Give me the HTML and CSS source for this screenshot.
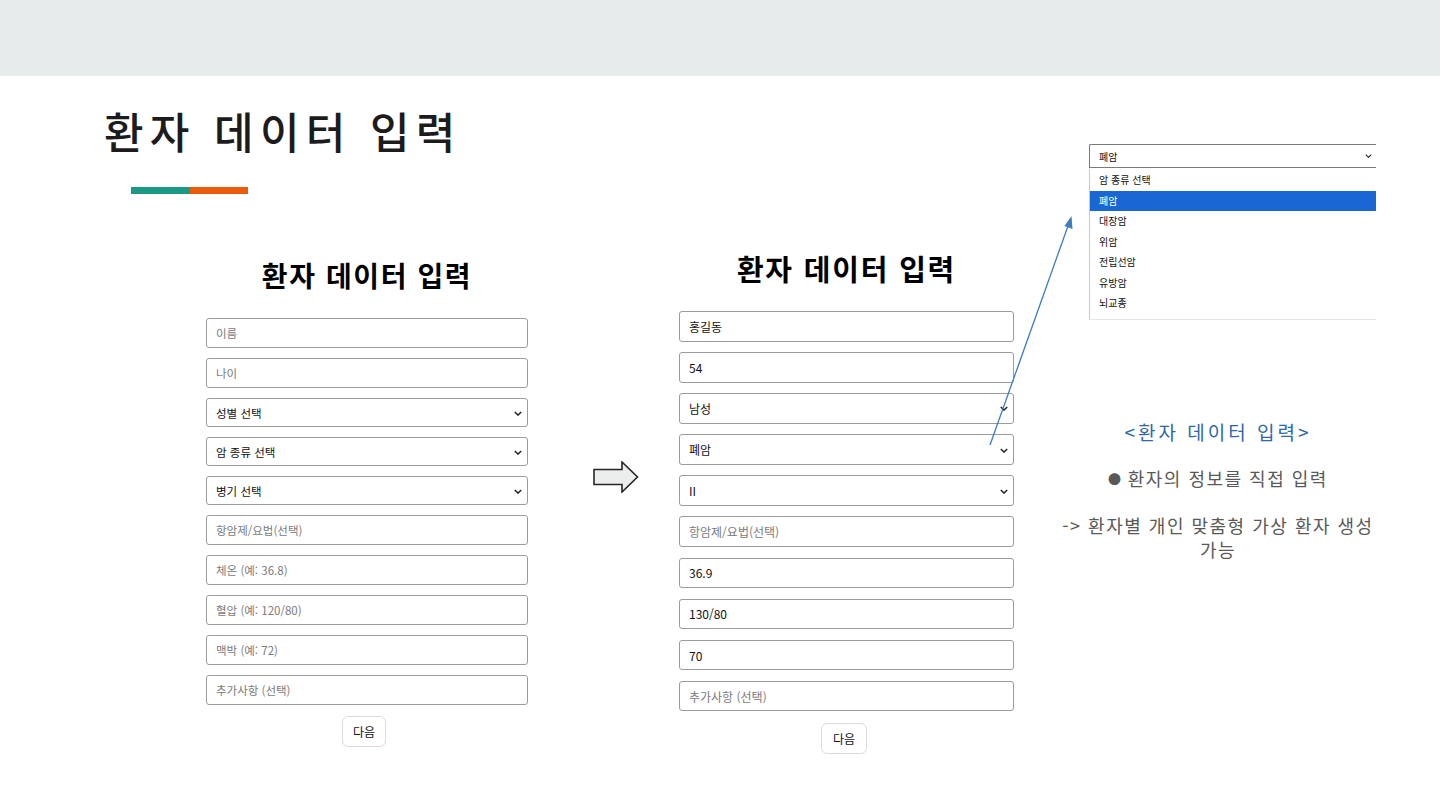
FILE: index.html
```html
<!DOCTYPE html>
<html lang="ko">
<head>
<meta charset="utf-8">
<title>환자 데이터 입력</title>
<link rel="stylesheet" href="styles.css">
</head>
<body>
<header class="topbar"></header>
<main class="slide">
  <section class="main">
    <h1 class="title">환자 데이터 입력</h1>
    <div class="accent"><span class="accent-teal"></span><span class="accent-orange"></span></div>
    <div class="forms-row">
      <form class="form form-left">
        <h2 class="form-heading">환자 데이터 입력</h2>
        <div class="fields">
          <input class="field" type="text" placeholder="이름">
          <input class="field" type="text" placeholder="나이">
          <div class="select-wrap"><select class="field select"><option>성별 선택</option></select><svg class="chev" viewBox="0 0 10 6"><path d="M1 1l4 4 4-4"/></svg></div>
          <div class="select-wrap"><select class="field select"><option>암 종류 선택</option></select><svg class="chev" viewBox="0 0 10 6"><path d="M1 1l4 4 4-4"/></svg></div>
          <div class="select-wrap"><select class="field select"><option>병기 선택</option></select><svg class="chev" viewBox="0 0 10 6"><path d="M1 1l4 4 4-4"/></svg></div>
          <input class="field" type="text" placeholder="항암제/요법(선택)">
          <input class="field" type="text" placeholder="체온 (예: 36.8)">
          <input class="field" type="text" placeholder="혈압 (예: 120/80)">
          <input class="field" type="text" placeholder="맥박 (예: 72)">
          <input class="field" type="text" placeholder="추가사항 (선택)">
        </div>
        <button class="next" type="button">다음</button>
      </form>

      <svg class="big-arrow" viewBox="0 0 46 32" width="46" height="32">
        <polygon points="1,8.5 29,8.5 29,1 44.5,16 29,31 29,23.5 1,23.5" fill="#eceeee" stroke="#262626" stroke-width="1.6" stroke-linejoin="miter"/>
      </svg>

      <form class="form form-mid">
        <h2 class="form-heading">환자 데이터 입력</h2>
        <div class="fields">
          <input class="field" type="text" value="홍길동">
          <input class="field" type="text" value="54">
          <div class="select-wrap"><select class="field select"><option>남성</option></select><svg class="chev" viewBox="0 0 10 6"><path d="M1 1l4 4 4-4"/></svg></div>
          <div class="select-wrap"><select class="field select"><option>폐암</option></select><svg class="chev" viewBox="0 0 10 6"><path d="M1 1l4 4 4-4"/></svg></div>
          <div class="select-wrap"><select class="field select"><option>II</option></select><svg class="chev" viewBox="0 0 10 6"><path d="M1 1l4 4 4-4"/></svg></div>
          <input class="field" type="text" placeholder="항암제/요법(선택)">
          <input class="field" type="text" value="36.9">
          <input class="field" type="text" value="130/80">
          <input class="field" type="text" value="70">
          <input class="field" type="text" placeholder="추가사항 (선택)">
        </div>
        <button class="next" type="button">다음</button>
      </form>
    </div>
  </section>

  <aside class="side">
    <div class="dropdown">
      <div class="dd-select"><span>폐암</span><svg class="chev chev-small" viewBox="0 0 10 6"><path d="M1 1l4 4 4-4"/></svg></div>
      <ul class="dd-list">
        <li>암 종류 선택</li>
        <li class="active">폐암</li>
        <li>대장암</li>
        <li>위암</li>
        <li>전립선암</li>
        <li>유방암</li>
        <li>뇌교종</li>
      </ul>
    </div>
    <div class="notes">
      <p class="note-title">&lt;환자 데이터 입력&gt;</p>
      <p class="note-bullet"><span class="dot">●</span> 환자의 정보를 직접 입력</p>
      <p class="note-text">-&gt; 환자별 개인 맞춤형 가상 환자 생성 가능</p>
    </div>
  </aside>

  <svg class="pointer" width="1440" height="810" viewBox="0 0 1440 810">
    <line x1="990" y1="445" x2="1068" y2="226" stroke="#3b7cc3" stroke-width="1.3"/>
    <polygon points="1071.5,216 1072.5,229 1064.5,226" fill="#3b7cc3"/>
  </svg>
</main>
</body>
</html>
```

FILE: styles.css
```css
* { box-sizing: border-box; }

html, body {
  margin: 0;
  padding: 0;
  width: 1440px;
  height: 810px;
  overflow: hidden;
  background: #ffffff;
  font-family: "Noto Sans CJK KR", "Noto Sans", sans-serif;
  color: #000;
}

.topbar {
  height: 76px;
  background: #e8ebeb;
}

.slide {
  display: flex;
  align-items: flex-start;
  height: 734px;
}

.main {
  width: 1060px;
  flex: none;
}

.title {
  margin: 26px 0 0 104px;
  font-size: 43px;
  line-height: 56px;
  font-weight: 500;
  letter-spacing: 6.3px;
  color: #1c1c1c;
}

.accent {
  display: flex;
  margin: 29px 0 0 131px;
  height: 7px;
}

.accent-teal { width: 59px; background: #1b9985; }
.accent-orange { width: 58px; background: #ea5b0c; }

.forms-row {
  display: flex;
  align-items: flex-start;
}

.form {
  display: flex;
  flex-direction: column;
  align-items: center;
}

.form-heading {
  margin: 0;
  font-weight: 700;
  color: #000;
  text-align: center;
}

.fields {
  display: flex;
  flex-direction: column;
  width: 100%;
}

.field {
  display: block;
  width: 100%;
  margin: 0;
  border: 1px solid #9c9c9c;
  border-radius: 3px;
  background: #fff;
  font-family: "Noto Sans CJK KR", "Noto Sans", sans-serif;
  font-size: 11.5px;
  color: #111;
  padding: 0 0 0 9px;
  outline: none;
}

.field::placeholder { color: #7b7b7b; }

.select {
  appearance: none;
  -webkit-appearance: none;
}

.select-wrap {
  position: relative;
}

.chev {
  position: absolute;
  right: 6px;
  top: 50%;
  width: 8px;
  height: 5px;
  margin-top: -2px;
  fill: none;
  stroke: #222;
  stroke-width: 1.8;
  pointer-events: none;
}

.next {
  font-family: "Noto Sans CJK KR", "Noto Sans", sans-serif;
  font-size: 12px;
  color: #111;
  background: #fff;
  border: 1px solid #dcdcdc;
  border-radius: 6px;
  padding: 0;
}

/* left form */
.form-left {
  width: 322px;
  margin: 63px 0 0 206px;
}
.form-left .form-heading {
  font-size: 28px;
  line-height: 36px;
  letter-spacing: 1.6px;
  margin-bottom: 25px;
}
.form-left .fields { gap: 10px; }
.form-left .field { height: 30px; }
.form-left .select { height: 29px; }
.form-left .next { margin: 11px 6px 0 0; width: 44px; height: 31px; }

/* arrow */
.big-arrow {
  flex: none;
  margin: 267px 0 0 65px;
}

/* middle form */
.form-mid {
  width: 335px;
  margin: 55px 0 0 40px;
}
.form-mid .form-heading {
  font-size: 29px;
  line-height: 38px;
  letter-spacing: 1.8px;
  margin-bottom: 24px;
}
.form-mid .fields { gap: 10.6px; }
.form-mid .field { height: 30.5px; font-size: 12px; }
.form-mid .next { margin: 12px 5px 0 0; width: 46px; height: 31px; }

/* side */
.side {
  width: 316px;
  flex: none;
  padding-top: 68px;
}

.dropdown {
  margin-left: 29px;
  width: 287px;
  font-size: 10px;
  color: #111;
}

.dd-select {
  position: relative;
  height: 24px;
  border: 1px solid #7a7a7a;
  border-right: none;
  border-radius: 2px 0 0 0;
  padding-left: 9px;
  display: flex;
  align-items: center;
}

.chev-small {
  right: 4px;
  width: 7px;
  height: 4px;
  stroke-width: 1.6;
}

.dd-list {
  list-style: none;
  margin: 1px 0 0;
  padding: 1px 0 5px;
  border-left: 1px solid #c8c8c8;
  border-bottom: 1px solid #e6e6e6;
}

.dd-list li {
  height: 20.5px;
  line-height: 20.5px;
  padding-left: 9px;
}

.dd-list li.active {
  background: #1967d2;
  color: #fff;
}

.notes {
  margin-top: 99px;
  text-align: center;
  color: #595959;
}

.notes p { margin: 0; }

.note-title {
  font-size: 19px;
  line-height: 26px;
  letter-spacing: 3px;
  color: #2e68a6;
}

.note-bullet {
  margin-top: 21px !important;
  font-size: 18px;
  line-height: 24px;
  letter-spacing: 1.5px;
}

.dot {
  font-size: 13px;
  vertical-align: 2px;
  letter-spacing: 0;
}

.note-text {
  margin-top: 22px !important;
  font-size: 18px;
  line-height: 24px;
  letter-spacing: 1.5px;
}

.pointer {
  position: absolute;
  top: 0;
  left: 0;
  pointer-events: none;
}
```
